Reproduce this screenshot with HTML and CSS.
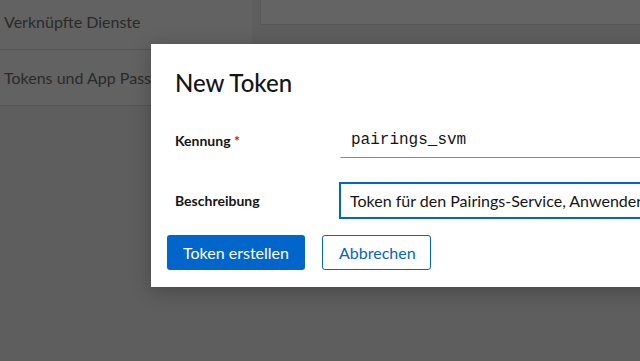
FILE: index.html
```html
<!DOCTYPE html>
<html lang="de">

<head>
    <meta charset="UTF-8">
    <link rel="stylesheet" href="styles.css">
</head>

<body>
    <div class="page">
        <nav class="side">
            <a class="side-item first">Verknüpfte Dienste</a>
            <a class="side-item">Tokens und App Passwörter</a>
        </nav>
        <main class="content">
            <div class="card"></div>
        </main>
    </div>

    <div class="modal">
        <h1 class="modal-title">New Token</h1>
        <form class="token-form">
            <div class="form-row">
                <label class="form-label" for="kennung">Kennung <span class="req">*</span></label>
                <input class="field field-mono" id="kennung" type="text" value="pairings_svm" />
            </div>
            <div class="form-row">
                <label class="form-label" for="beschreibung">Beschreibung</label>
                <input class="field field-focus" id="beschreibung" type="text"
                    value="Token für den Pairings-Service, Anwendertests" />
            </div>
            <div class="actions">
                <button type="button" class="btn btn-primary">Token erstellen</button>
                <button type="button" class="btn btn-secondary">Abbrechen</button>
            </div>
        </form>
    </div>
</body>

</html>
```

FILE: styles.css
```css
html,
body {
    margin: 0;
    height: 100%;
}

body {
    background-color: #5e5e5e;
    font-family: "Lato", "Liberation Sans", sans-serif;
    color: #151515;
    overflow: hidden;
}

.page {
    display: flex;
    gap: 8px;
}

.side {
    width: 252px;
    display: flex;
    flex-direction: column;
    background-color: #626262;
}

.side-item {
    display: flex;
    align-items: center;
    padding: 0 4px;
    height: 55px;
    border-bottom: 1px solid #555555;
    font-size: 16px;
    color: #2a2a2a;
    white-space: nowrap;
}

.side-item.first {
    height: 50px;
    padding-bottom: 6px;
    box-sizing: border-box;
}

.content {
    flex: 1;
}

.card {
    height: 24px;
    background-color: #646464;
    border-left: 1px solid #595959;
    border-bottom: 1px solid #575757;
}

.modal {
    position: absolute;
    left: 151px;
    top: 44px;
    width: 560px;
    height: 243px;
    box-sizing: border-box;
    padding: 24px 0 0 24px;
    background-color: #ffffff;
    box-shadow: 0 4px 18px rgba(0, 0, 0, 0.25);
}

.modal-title {
    margin: 0 0 24px;
    font-size: 24px;
    font-weight: 500;
    line-height: 30px;
}

.token-form {
    display: flex;
    flex-direction: column;
}

.form-row {
    display: flex;
    align-items: center;
    margin-bottom: 24px;
}

.form-row:nth-child(2) {
    margin-bottom: 16px;
}

.form-label {
    width: 164px;
    font-size: 14px;
    font-weight: 700;
}

.req {
    color: #c9190b;
}

.field {
    flex: 1;
    height: 36px;
    box-sizing: border-box;
    padding: 0 10px;
    border: 1px solid transparent;
    border-bottom-color: #8a8d90;
    font-size: 16px;
    font-family: inherit;
    color: #151515;
    outline: none;
}

.field-mono {
    font-family: "Liberation Mono", monospace;
    margin-left: 1px;
}

.field-focus {
    height: 37px;
    border: 2px solid #0066cc;
    padding: 0 9px;
}

.actions {
    display: flex;
    gap: 17px;
    margin-left: -8px;
}

.btn {
    height: 35px;
    margin: 0;
    padding: 0 16px;
    border-radius: 3px;
    font-family: inherit;
    font-size: 16px;
    cursor: pointer;
}

.btn-primary {
    background-color: #0066cc;
    border: none;
    color: #ffffff;
    width: 138px;
}

.btn-secondary {
    background-color: #ffffff;
    border: 1px solid #0066cc;
    color: #0066cc;
    width: 109px;
}
```
